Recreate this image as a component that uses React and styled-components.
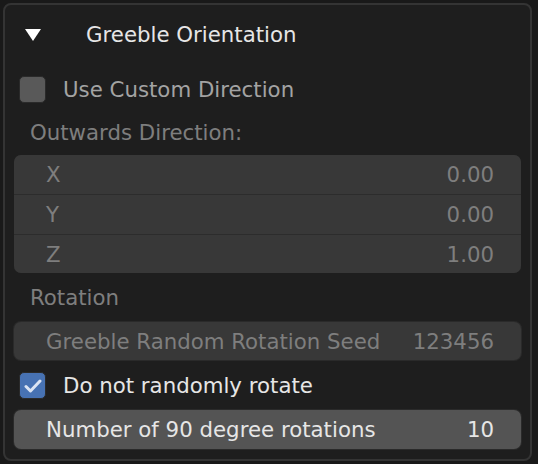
import React from 'react';
import styled, { createGlobalStyle } from 'styled-components';

const GlobalStyle = createGlobalStyle`
  html, body {
    margin: 0;
    padding: 0;
    background: #191919;
  }
  body {
    font-family: "DejaVu Sans", "Liberation Sans", sans-serif;
    font-size: 21.3px;
  }
`;

const Panel = styled.div`
  box-sizing: border-box;
  margin: 3px;
  width: 529px;
  height: 458px;
  border: 2px solid #343434;
  border-radius: 8px;
  background: #1e1e1e;
  overflow: hidden;
`;

const Header = styled.div`
  display: flex;
  align-items: center;
  height: 58px;
  padding-left: 20px;
  color: #e6e6e6;
`;

const Arrow = styled.svg`
  width: 16px;
  height: 12px;
  margin-right: 45px;
  margin-top: 1px;
`;

const Body = styled.div`
  display: flex;
  flex-direction: column;
  padding: 7px 9px 0 9px;
`;

const CheckRow = styled.label`
  display: flex;
  align-items: center;
  height: 39px;
  margin-top: ${(p) => p.$top || 0}px;
  padding-left: 6px;
  color: ${(p) => (p.$dim ? '#a3a3a3' : '#e6e6e6')};
`;

const Box = styled.span`
  box-sizing: border-box;
  width: 27px;
  height: 27px;
  border: 1px solid #2a2a2a;
  border-radius: 5px;
  background: ${(p) => (p.$checked ? '#4772b3' : '#595959')};
  margin-right: 17px;
  margin-left: -1px;
  display: flex;
  align-items: center;
  justify-content: center;
`;

const SectionLabel = styled.div`
  display: flex;
  align-items: center;
  height: 39px;
  margin-top: ${(p) => p.$top || 0}px;
  padding-left: 16px;
  color: #7e7e7e;
`;

const Group = styled.div`
  margin-top: ${(p) => p.$top || 0}px;
  border-radius: 7px;
  overflow: hidden;
  display: flex;
  flex-direction: column;
  gap: 1px;
  background: #2c2c2c;
`;

const Field = styled.div`
  display: flex;
  align-items: center;
  justify-content: space-between;
  height: ${(p) => p.$h || 39}px;
  padding: 0 27px 0 32px;
  background: ${(p) => (p.$active ? '#545454' : '#383838')};
  color: ${(p) => (p.$active ? '#e6e6e6' : '#7e7e7e')};
  border-radius: ${(p) => (p.$single ? '7px' : '0')};
  margin-top: ${(p) => p.$top || 0}px;
  box-shadow: ${(p) => (p.$single ? '0 0 0 1px #2a2a2a' : 'none')};
`;

const Check = () => (
  <svg width="18" height="14" viewBox="0 0 18 14">
    <path d="M2 7.5 L6.5 12 L16 2" fill="none" stroke="#dbe4f3" strokeWidth="3" strokeLinecap="round" strokeLinejoin="round" />
  </svg>
);

const vector = [
  ['X', '0.00'],
  ['Y', '0.00'],
  ['Z', '1.00']
];

const App = () => (
  <>
    <GlobalStyle />
    <Panel>
      <Header>
        <Arrow viewBox="0 0 16 12">
          <path d="M0 0 H16 L8 12 Z" fill="#ffffff" />
        </Arrow>
        Greeble Orientation
      </Header>
      <Body>
        <CheckRow $dim>
          <Box />
          Use Custom Direction
        </CheckRow>
        <SectionLabel $top={4}>Outwards Direction:</SectionLabel>
        <Group $top={3}>
          {vector.map(([axis, value]) => (
            <Field key={axis} $h={axis === 'Z' ? 38 : 39}>
              <span>{axis}</span>
              <span>{value}</span>
            </Field>
          ))}
        </Group>
        <SectionLabel $top={5}>Rotation</SectionLabel>
        <Field $single $top={5} $h={38}>
          <span>Greeble Random Rotation Seed</span>
          <span>123456</span>
        </Field>
        <CheckRow $top={6}>
          <Box $checked>
            <Check />
          </Box>
          Do not randomly rotate
        </CheckRow>
        <Field $single $active $top={5}>
          <span>Number of 90 degree rotations</span>
          <span>10</span>
        </Field>
      </Body>
    </Panel>
  </>
);

export default App;
